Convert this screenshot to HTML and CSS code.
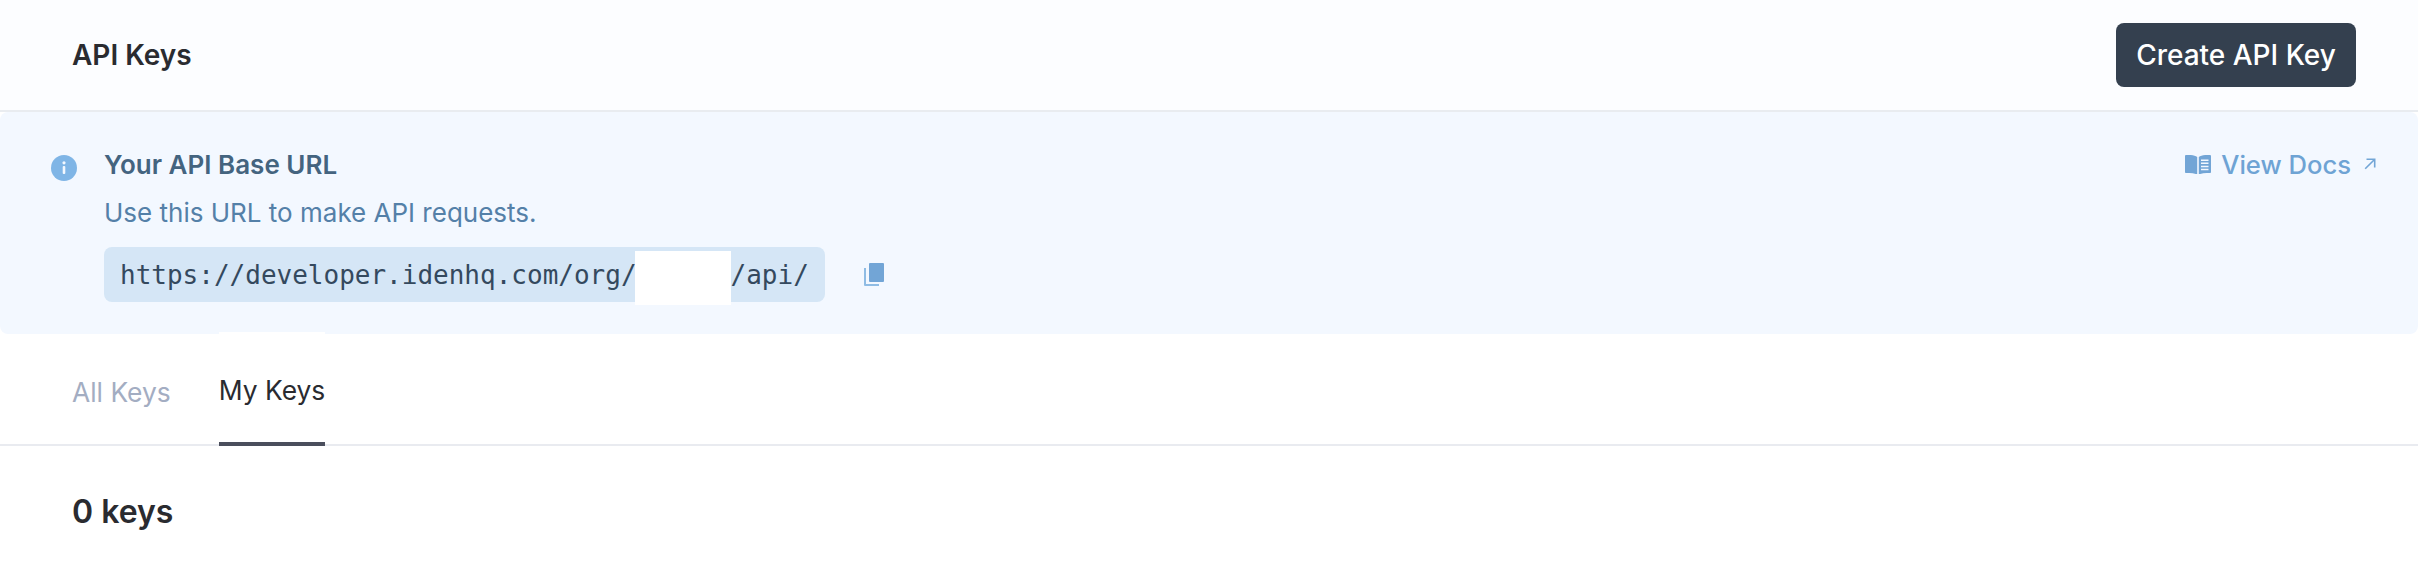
FILE: index.html
```html
<!DOCTYPE html>
<html lang="en">
<head>
<meta charset="utf-8">
<title>API Keys</title>
<link rel="stylesheet" href="styles.css">
</head>
<body>
<header class="topbar">
  <h1 class="title">API Keys</h1>
  <button class="create-btn" type="button">Create API Key</button>
</header>
<section class="alert">
  <svg class="info-icon" viewBox="0 0 26 26" aria-hidden="true"><circle cx="13" cy="13" r="13" fill="#7fb5e6"/><rect x="11.7" y="11" width="2.6" height="8" rx="1" fill="#f3f8ff"/><circle cx="13" cy="7.8" r="1.6" fill="#f3f8ff"/></svg>
  <div class="alert-body">
    <div class="alert-title">Your API Base URL</div>
    <p class="alert-text">Use this URL to make API requests.</p>
    <div class="url-row">
      <code class="url-box">https://developer.idenhq.com/org/<span class="redacted"></span>/api/</code>
      <button class="copy-btn" type="button" aria-label="Copy">
        <svg class="copy-icon" viewBox="0 0 20 24" aria-hidden="true"><path d="M0 5h2v16h13v2H1a1 1 0 0 1-1-1z" fill="#8fbce4"/><rect x="5" y="0" width="15" height="19" rx="1" fill="#72a5d6"/></svg>
      </button>
    </div>
  </div>
  <a class="docs-link" href="#">
    <svg class="book-icon" viewBox="0 1 26 19" preserveAspectRatio="none" aria-hidden="true"><path d="M12.2 3C10 1.4 6 .6 1.2 1 .5 1 0 1.500 0 2.200V18c0 .7.600 1.200 1.300 1.100 4-.5 8 0 10.900 1.500z" fill="#72a5d6"/><path d="M13.800 3c2.200-1.600 6.200-2.400 11-2 .7 0 1.200.5 1.200 1.200V18c0 .7-.6 1.200-1.300 1.100-4-.5-8 0-10.900 1.500z" fill="#72a5d6"/><path d="M16 6.200h7.500M16 9.300h7.500M16 12.400h7.500M16 15.500h7.500" stroke="#f3f8ff" stroke-width="1.500"/></svg>
    <span>View Docs</span>
    <svg class="arrow-icon" viewBox="0 0 12 12" aria-hidden="true"><path d="M1.200 10.800 10.500 1.500M2.500 1.300h8.200v8.200" fill="none" stroke="#72a5d6" stroke-width="1.600"/></svg>
  </a>
</section>
<nav class="tabs">
  <a class="tab" href="#">All Keys</a>
  <a class="tab tab-active" href="#">My Keys</a>
</nav>
<h2 class="count">0 keys</h2>
</body>
</html>
```
FILE: styles.css
```css
* { box-sizing: border-box; }
html, body { margin: 0; padding: 0; background: #fff; }
body { font-family: Inter, "Liberation Sans", sans-serif; color: #26272b; height: 576px; overflow: hidden; }
.topbar { display: flex; align-items: center; justify-content: space-between; height: 112px; padding: 0 62px 0 72px; background: #fcfdff; border-bottom: 2px solid #e9ecf0; }
.title { margin: 0; font-size: 28px; font-weight: 600; line-height: 36px; color: #2a2b30; }
.create-btn { width: 240px; height: 64px; padding: 0; border: 0; border-radius: 8px; background: #34404f; color: #fff; font: 500 28px/36px Inter, sans-serif; }
.alert { display: flex; align-items: flex-start; height: 222px; padding: 38px 42px 0 51px; background: #f3f8ff; border-radius: 8px; }
.info-icon { width: 26px; height: 26px; margin-top: 5px; flex: none; }
.alert-body { flex: 1; margin-left: 27px; }
.alert-title { font-size: 26px; font-weight: 600; line-height: 36px; color: #44647f; margin-top: -3px; }
.alert-text { margin: 12px 0 0; font-size: 26px; line-height: 36px; color: #5480a8; }
.url-row { display: flex; align-items: center; margin-top: 16px; }
.url-box { display: flex; align-items: center; height: 55px; padding: 0 16px; border-radius: 8px; background: #d5e6f6; color: #34495e; font-family: "DejaVu Sans Mono", monospace; font-size: 26px; }
.redacted { display: block; width: 96px; height: 54px; margin: 6px 0 0 -2px; background: #fff; }
.copy-btn { display: flex; padding: 0; margin-left: 39px; border: 0; background: none; }
.copy-icon { width: 20px; height: 24px; }
.docs-link { display: flex; align-items: center; margin-top: -3px; color: #6ea3d4; font-size: 25.6px; font-weight: 500; line-height: 36px; text-decoration: none; }
.book-icon { width: 26px; height: 19px; margin: -2px 10px 0 0; }
.arrow-icon { width: 12px; height: 12px; margin: -2px 0 0 13px; }
.tabs { display: flex; gap: 48px; height: 114px; margin-top: -2px; padding: 0 72px; border-bottom: 2px solid #e9ebf0; }
.tab { display: flex; align-items: center; height: 114px; padding-top: 6px; font-size: 26.4px; color: #a3adc2; text-decoration: none; }
.tab-active { color: #2a2b30; background: #fff; border-bottom: 4px solid #4a4e5c; }
.count { margin: 45px 0 0 72px; font-size: 32px; font-weight: 600; line-height: 42px; color: #2a2b30; }
```
